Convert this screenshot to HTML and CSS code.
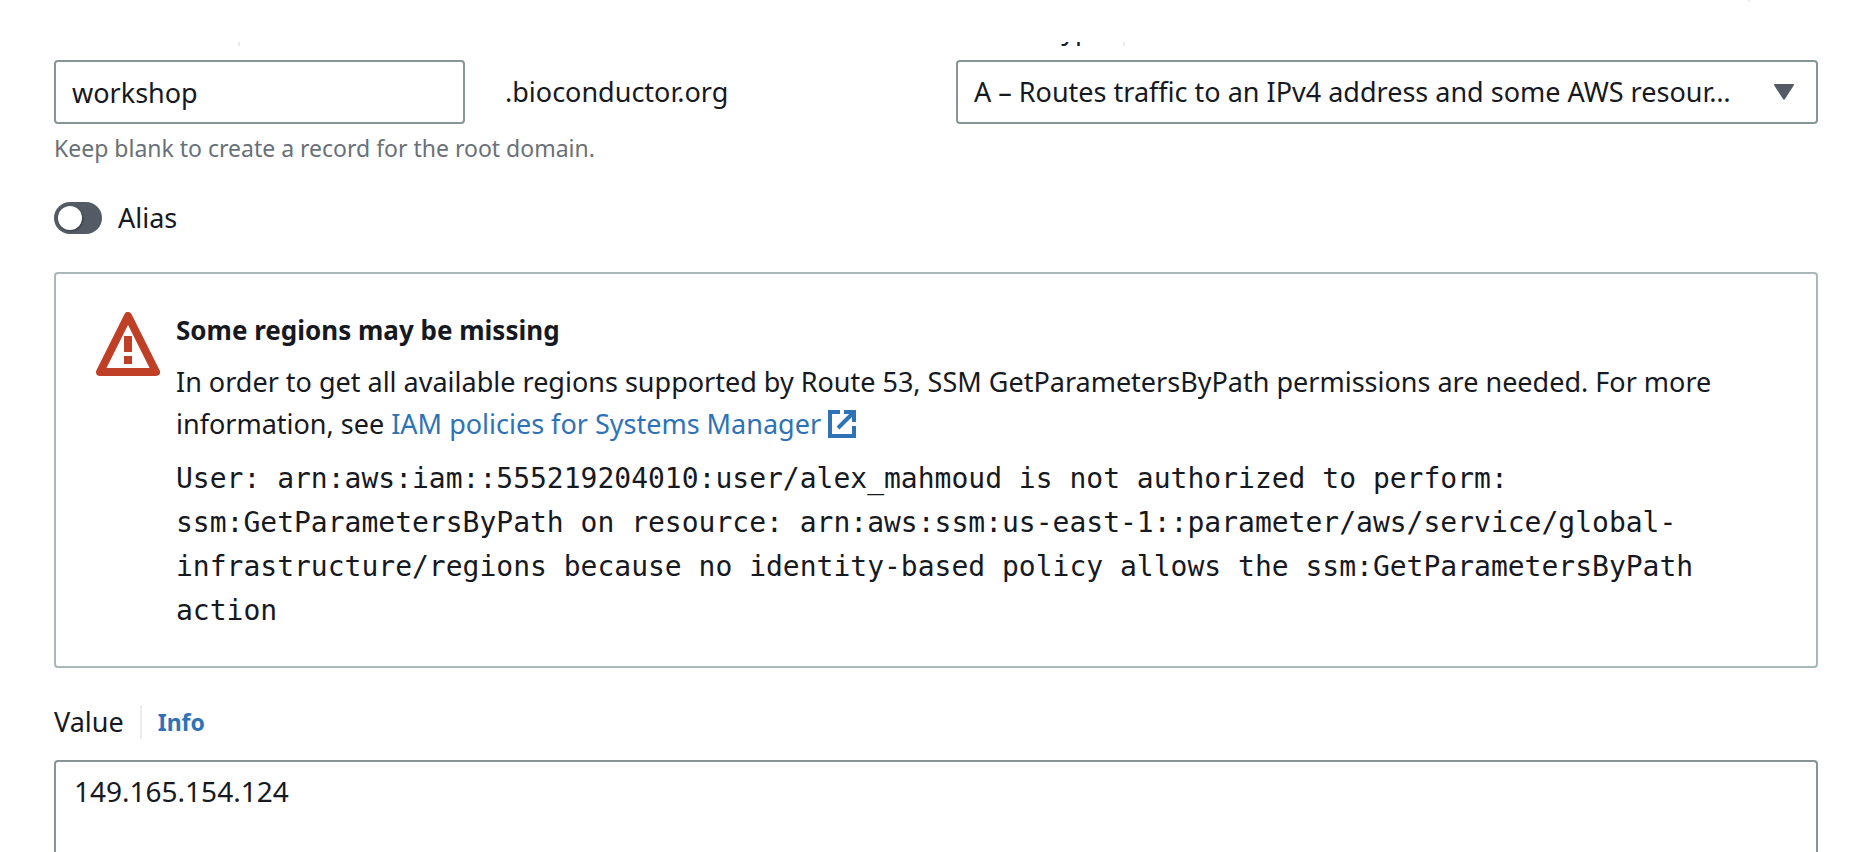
FILE: index.html
```html
<!DOCTYPE html>
<html lang="en">
<head>
<meta charset="utf-8">
<meta name="viewport" content="width=device-width, initial-scale=1">
<title>Create record</title>
<link rel="stylesheet" href="styles.css">
</head>
<body>
<div class="topbar"><span class="topbar-mark"></span></div>
<main class="form">
  <div class="row">
    <div class="field">
      <div class="label-clip">
        <div class="label-row"><label for="name">Record name</label><span class="divider"></span></div>
      </div>
      <div class="name-group">
        <input class="control name-input" id="name" type="text" value="workshop">
        <span>.bioconductor.org</span>
      </div>
      <p class="hint">Keep blank to create a record for the root domain.</p>
    </div>
    <div class="field">
      <div class="label-clip">
        <div class="label-row"><label for="type">Record type</label><span class="divider"></span></div>
      </div>
      <div class="select-wrap">
        <select class="control" id="type"><option>A – Routes traffic to an IPv4 address and some AWS resour…</option></select>
        <svg class="caret" viewBox="0 0 20 16" aria-hidden="true"><path d="M1 0h18q1.500 0 .7 1.600L11 15q-1 1.500-2 0L.3 1.600Q-.5 0 1 0z"/></svg>
      </div>
    </div>
  </div>

  <label class="toggle"><input class="switch" type="checkbox" role="switch">Alias</label>

  <section class="alert">
    <svg class="alert-icon" viewBox="0 0 64 64" aria-hidden="true">
      <path d="M32 4 60 60H4z" fill="none" stroke="currentColor" stroke-width="8" stroke-linejoin="round"/>
      <path d="M28 24h8v16h-8zM28 44h8v8h-8z" fill="currentColor"/>
    </svg>
    <div class="alert-body">
      <h2 class="alert-title">Some regions may be missing</h2>
      <p class="alert-text">In order to get all available regions supported by Route 53, SSM GetParametersByPath permissions are needed. For more information, see <a class="link" href="#">IAM policies for Systems Manager <svg class="external" viewBox="0 0 28 28" aria-hidden="true"><path d="M12 2H2v24h24V16M16 2h10v10M26 2 10 18" fill="none" stroke="currentColor" stroke-width="4"/></svg></a></p>
      <p class="alert-code">User: arn:aws:iam::555219204010:user/alex_mahmoud is not authorized to perform: ssm:GetParametersByPath on resource: arn:aws:ssm:us-east-1::parameter/aws/service/global-infrastructure/regions because no identity-based policy allows the ssm:GetParametersByPath action</p>
    </div>
  </section>

  <div class="label-row value-label"><label for="value">Value</label><span class="divider"></span><a class="info" href="#">Info</a></div>
  <textarea class="control value" id="value" rows="4">149.165.154.124</textarea>
</main>
</body>
</html>
```
FILE: styles.css
```css
* { box-sizing: border-box; }

body {
  margin: 0;
  height: 100vh;
  overflow: hidden;
  background: #fff;
  color: #16191f;
  font: 27px/42px "Noto Sans", sans-serif;
}

p, h2 { margin: 0; }

.topbar {
  display: flex;
  justify-content: flex-end;
  height: 42px;
  padding-right: 118px;
}
.topbar-mark { width: 2px; height: 2px; background: #eaeded; }

.form {
  display: flex;
  flex-direction: column;
  height: calc(100vh - 42px);
  padding: 0 50px 0 54px;
}

.row {
  display: grid;
  grid-template-columns: 1fr 1fr;
  column-gap: 40px;
}

.label-clip {
  display: flex;
  align-items: flex-end;
  height: 4px;
  margin-bottom: 14px;
  overflow: hidden;
}

.label-row { display: flex; align-items: center; line-height: 34px; }
.divider {
  width: 2px;
  height: 34px;
  margin: 0 16px;
  background: #eaeded;
}

.info {
  color: #2e73b8;
  font-size: 23px;
  font-weight: 700;
  line-height: 36px;
  text-decoration: none;
}

.control {
  width: 100%;
  height: 64px;
  padding: 0 16px;
  border: 2px solid #879596;
  border-radius: 4px;
  background: #fff;
  color: inherit;
  font: inherit;
  outline: 0;
  appearance: none;
}

.name-group {
  display: grid;
  grid-template-columns: 1fr 1fr;
  column-gap: 40px;
  align-items: center;
}

.select-wrap { display: grid; align-items: center; }
.select-wrap > * { grid-area: 1 / 1; }
.caret {
  justify-self: end;
  width: 20px;
  height: 16px;
  margin-right: 24px;
  fill: #545b64;
  pointer-events: none;
}

.hint {
  margin-top: 8px;
  color: #687078;
  font-size: 23px;
  line-height: 32px;
}

.toggle {
  display: flex;
  align-items: center;
  gap: 16px;
  margin: 38px 0;
  line-height: 32px;
}
.switch {
  display: flex;
  align-items: center;
  width: 48px;
  height: 32px;
  margin: 0;
  padding: 4px;
  border-radius: 16px;
  background: #545b64;
  appearance: none;
}
.switch::before {
  content: "";
  width: 24px;
  height: 24px;
  border-radius: 50%;
  background: #fff;
  box-shadow: 1px 1px 2px #16191f80;
}

.alert {
  display: flex;
  gap: 16px;
  padding: 35px 38px 33px 40px;
  border: 2px solid #aab7b8;
  border-radius: 4px;
}
.alert-icon {
  flex: none;
  width: 64px;
  height: 64px;
  margin-top: 3px;
  color: #bf4026;
}
.alert-title { font-size: 26px; line-height: 42px; }
.alert-text { margin-top: 10px; }
.link { color: #2e73b8; text-decoration: none; }
.external { width: 28px; height: 28px; vertical-align: -4px; }
.alert-code {
  margin-top: 12px;
  font: 28px/44px "DejaVu Sans Mono", monospace;
}

.value-label { margin: 36px 0 20px; }
.value {
  flex: 1;
  padding: 8px 18px;
  border-bottom: 0;
  border-radius: 4px 4px 0 0;
  font-size: 28px;
  resize: none;
}
```
